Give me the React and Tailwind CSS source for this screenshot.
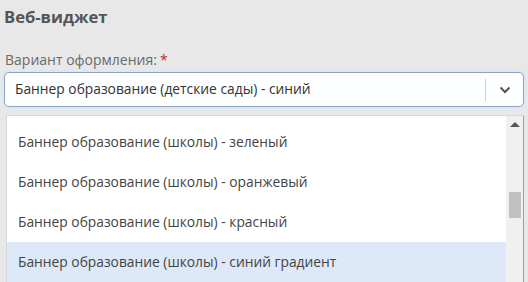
import React from "react";

export default function App() {
  const items = [
    "Баннер образование (школы) - зеленый",
    "Баннер образование (школы) - оранжевый",
    "Баннер образование (школы) - красный",
    "Баннер образование (школы) - синий градиент",
  ];
  return (
    <div
      className="w-[528px] h-[282px] overflow-hidden bg-[#e8e8e8] flex flex-col"
      style={{ fontFamily: '"Open Sans", sans-serif' }}
    >
      <div className="px-[4px] pt-[4px] text-[16.6px] font-bold text-[#555] leading-[26px]">
        Веб-виджет
      </div>
      <div className="px-[5px] pt-[20px] text-[14px] text-[#6a6a6a] leading-[20px]">
        Вариант оформления:<span className="text-[#c0282d] ml-[3px]">*</span>
      </div>
      <div className="mx-[4px] mt-[2px] h-[36px] rounded-[5px] border border-[#8ea4bc] bg-[#fdfeff] flex items-center shadow-[0_0_0_2px_#dde7f2]">
        <div className="flex-1 pl-[10px] text-[13.8px] text-[#333] whitespace-nowrap">
          Баннер образование (детские сады) - синий
        </div>
        <div className="w-px h-[22px] bg-[#cfcfcf]" />
        <div className="w-[37px] flex items-center justify-center">
          <svg width="12" height="8" viewBox="0 0 12 8">
            <path d="M1.5 1.5 L6 6 L10.5 1.5" fill="none" stroke="#555" strokeWidth="2" />
          </svg>
        </div>
      </div>
      <div className="ml-[6px] mr-[4px] mt-[8px] flex-1 bg-white border-l border-t border-[#d8d8d8] border-r-[#a0a0a0] border-r flex">
        <div className="flex-1 flex flex-col pt-[6px]">
          {items.map((t, i) => (
            <div
              key={i}
              className={`h-[40px] flex items-center pl-[11px] text-[13.8px] text-[#444] whitespace-nowrap ${
                i === 3 ? "bg-[#dde9f8]" : ""
              }`}
            >
              {t}
            </div>
          ))}
        </div>
        <div className="w-[17px] bg-[#f0f0f0] flex flex-col items-center">
          <svg width="10" height="6" viewBox="0 0 10 6" className="mt-[5px]">
            <path d="M0 6 L5 1 L10 6 Z" fill="#555" />
          </svg>
          <div className="mt-[65px] w-[12px] h-[26px] bg-[#c1c1c1]" />
        </div>
      </div>
    </div>
  );
}
